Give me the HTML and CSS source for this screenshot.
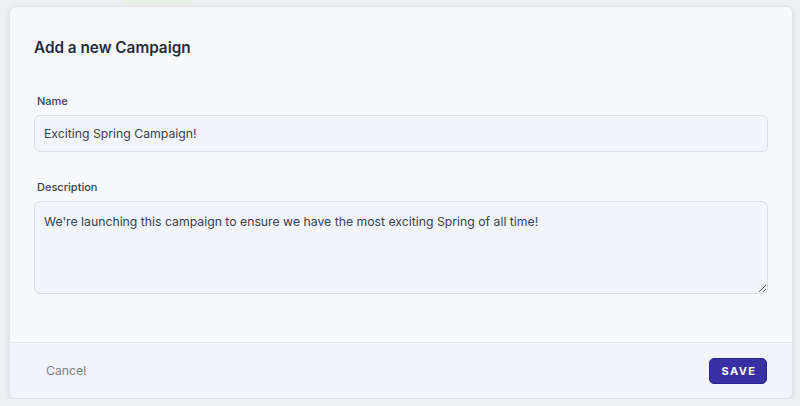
FILE: index.html
```html
<!DOCTYPE html>
<html lang="en">
<head>
  <meta charset="UTF-8">
  <meta name="viewport" content="width=device-width, initial-scale=1.0">
  <title>Add a new Campaign</title>
  <link rel="stylesheet" href="styles.css">
</head>
<body>
  <div class="backdrop-pill"></div>
  <div class="modal">
    <div class="modal-body">
      <h2 class="modal-title">Add a new Campaign</h2>

      <div class="field">
        <label for="campaignName" class="label">Name</label>
        <input type="text" id="campaignName" class="control" value="Exciting Spring Campaign!">
      </div>

      <div class="field">
        <label for="campaignDesc" class="label">Description</label>
        <textarea id="campaignDesc" class="control textarea">We're launching this campaign to ensure we have the most exciting Spring of all time!</textarea>
      </div>
    </div>

    <div class="modal-footer">
      <button class="btn-link">Cancel</button>
      <button class="btn-primary">Save</button>
    </div>
  </div>
</body>
</html>
```

FILE: styles.css
```css
:root {
  --page-bg: #eef0f4;
  --card-bg: #f8f9fb;
  --footer-bg: #f1f4f8;
  --field-bg: #f1f4f8;
  --field-border: #d9dee6;
  --text: #1f2937;
  --muted: #6b7280;
  --indigo: #3730a3;
}
* {
  box-sizing: border-box;
}
body {
  font-family: Inter, 'Noto Sans', sans-serif;
  background-color: var(--page-bg);
  margin: 0;
  padding: 6px 7px 0 9px;
  color: var(--text);
  position: relative;
}
/* faint element peeking out above the dialog */
.backdrop-pill {
  position: absolute;
  top: -10px;
  left: 122px;
  width: 72px;
  height: 14px;
  border-radius: 7px;
  background: #e6f3e4;
}
.modal {
  position: relative;
  background: var(--card-bg);
  border: 1px solid #dfe3ea;
  border-radius: 7px;
  box-shadow: 0 2px 6px rgba(15, 23, 42, 0.08);
  height: 393px;
  display: flex;
  flex-direction: column;
  overflow: hidden;
}
.modal-body {
  padding: 29px 24px 0 24px;
  flex: 1;
}
.modal-title {
  margin: 0 0 33px;
  font-size: 15.3px;
  line-height: 24px;
  font-weight: 600;
  color: #242b3a;
}
.field {
  display: flex;
  flex-direction: column;
  margin-bottom: 27px;
}
.label {
  font-size: 11px;
  line-height: 16px;
  font-weight: 500;
  color: #374151;
  padding-left: 3px;
  margin-bottom: 6px;
}
.control {
  font-family: inherit;
  font-size: 12.25px;
  color: #374151;
  background: var(--field-bg);
  border: 1px solid var(--field-border);
  border-radius: 6px;
  height: 37px;
  padding: 0 9px;
  outline: none;
}
.textarea {
  height: 93px;
  padding: 11px 9px;
  line-height: 18px;
  resize: vertical;
}
.modal-footer {
  height: 56px;
  background: var(--footer-bg);
  border-top: 1px solid #e5e9ef;
  display: flex;
  align-items: center;
  justify-content: space-between;
  padding: 0 25px 0 36px;
}
.btn-link {
  background: none;
  border: none;
  padding: 0;
  font-family: inherit;
  font-size: 12.25px;
  color: #7b8190;
  cursor: pointer;
}
.btn-primary {
  background: var(--indigo);
  color: #fff;
  border: 1px solid #2a2490;
  border-radius: 5px;
  height: 26px;
  width: 58px;
  font-family: inherit;
  font-size: 11px;
  font-weight: 700;
  letter-spacing: 1.4px;
  text-transform: uppercase;
  cursor: pointer;
  padding: 0 0 0 2px;
}
```
